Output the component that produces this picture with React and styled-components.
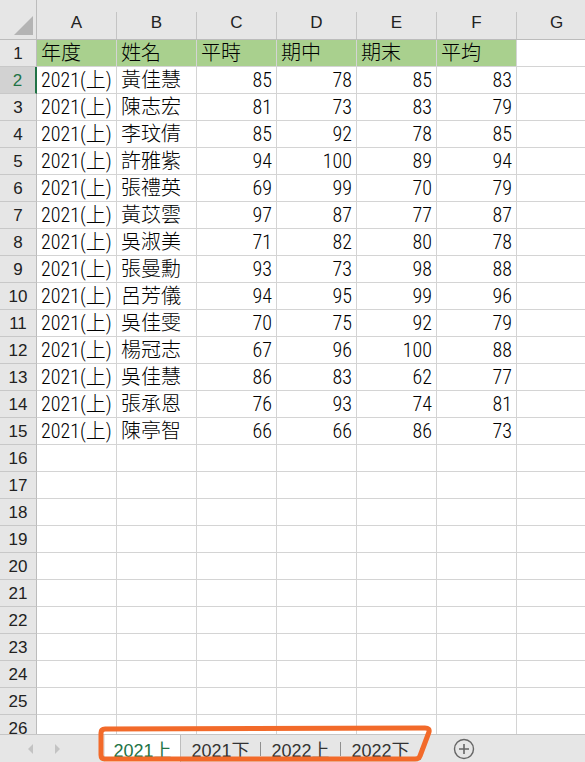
import React from 'react'
import styled, { createGlobalStyle } from 'styled-components'

const GlobalStyle = createGlobalStyle`
    * { box-sizing: border-box; }
    body {
        margin: 0;
        overflow: hidden;
        background: #fff;
    }
`

const CELL_FONT = `"Roboto Condensed", "Liberation Sans Narrow", "DejaVu Sans Condensed", "Noto Sans CJK TC", sans-serif`
const UI_FONT = `"Liberation Sans", "Noto Sans CJK TC", sans-serif`

const Window = styled.div`
    position: relative;
    width: 585px;
    height: 762px;
    display: flex;
    flex-direction: column;
    overflow: hidden;
    background: #fff;
`

const Sheet = styled.div`
    flex: 1;
    overflow: hidden;
`

const HeaderRow = styled.div`
    display: flex;
    height: 40px;
    background: #e6e6e6;
    border-bottom: 1px solid #bcbcbc;
`

const Corner = styled.div`
    flex: 0 0 37px;
    display: flex;
    align-items: flex-end;
    justify-content: flex-end;
    padding: 0 3px 4px 0;
    border-right: 1px solid #bcbcbc;
`

const CornerTriangle = styled.div`
    width: 0;
    height: 0;
    border-left: 19px solid transparent;
    border-bottom: 19px solid #b4b4b4;
`

const ColHead = styled.div`
    flex: 0 0 80px;
    margin-top: 12px;
    display: flex;
    align-items: center;
    justify-content: center;
    padding-bottom: 6px;
    border-right: 1px solid #c4c4c4;
    font-family: ${UI_FONT};
    font-size: 17px;
    color: #222;
`

const Row = styled.div`
    display: flex;
    height: 27px;
`

const RowHead = styled.div`
    flex: 0 0 37px;
    display: flex;
    align-items: center;
    justify-content: center;
    padding-top: 2px;
    background: ${p => (p.$active ? '#d2d2d2' : '#e6e6e6')};
    color: ${p => (p.$active ? '#217346' : '#222')};
    border-bottom: 1px solid #c8c8c8;
    border-right: ${p => (p.$active ? '2px solid #217346' : '1px solid #bcbcbc')};
    font-family: ${UI_FONT};
    font-size: 17px;
`

const Cell = styled.div`
    flex: 0 0 80px;
    display: flex;
    align-items: flex-end;
    justify-content: ${p => (p.$num ? 'flex-end' : 'flex-start')};
    padding: 0 4px 1px 4px;
    background: ${p => (p.$fill ? '#a9d08e' : '#fff')};
    border-right: 1px solid #d4d4d4;
    border-bottom: 1px solid #d4d4d4;
    font-family: ${CELL_FONT};
    font-size: 20px;
    font-weight: 300;
    line-height: 24px;
    color: #000;
    white-space: nowrap;
    overflow: hidden;
`

const TabBar = styled.div`
    flex: 0 0 27px;
    display: flex;
    align-items: stretch;
    background: #e6e6e6;
    border-top: 1px solid #c6c6c6;
    font-family: ${UI_FONT};
    font-size: 18px;
`

const NavArea = styled.div`
    flex: 0 0 105px;
    display: flex;
    align-items: center;
    gap: 22px;
    padding-left: 28px;
`

const NavArrow = styled.div`
    width: 0;
    height: 0;
    border-top: 5px solid transparent;
    border-bottom: 5px solid transparent;
    ${p => (p.$dir === 'left'
        ? 'border-right: 5px solid #c3c3c3;'
        : 'border-left: 5px solid #c3c3c3;')}
`

const Tab = styled.div`
    flex: 0 0 ${p => (p.$active ? '76px' : '79px')};
    display: flex;
    align-items: center;
    justify-content: center;
    padding-top: 1px;
    background: ${p => (p.$active ? '#fff' : 'transparent')};
    color: ${p => (p.$active ? '#217346' : '#333')};
    border-right: ${p => (p.$active ? '1px solid #bdbdbd' : 'none')};
`

const TabSep = styled.div`
    flex: 0 0 1px;
    align-self: center;
    height: 14px;
    background: #8f8f8f;
`

const TabEnd = styled.div`
    flex: 0 0 1px;
    align-self: flex-end;
    height: 12px;
    margin-bottom: 2px;
    background: #9a9a9a;
`

const AddButton = styled.div`
    margin-left: 32px;
    display: flex;
    align-items: center;
`

const Annotation = styled.svg`
    position: absolute;
    left: 0;
    top: 0;
    pointer-events: none;
`

const columns = ['A', 'B', 'C', 'D', 'E', 'F', 'G']
const heads = ['年度', '姓名', '平時', '期中', '期末', '平均']

const students = [
    ['黃佳慧', 85, 78, 85, 83],
    ['陳志宏', 81, 73, 83, 79],
    ['李玟倩', 85, 92, 78, 85],
    ['許雅紫', 94, 100, 89, 94],
    ['張禮英', 69, 99, 70, 79],
    ['黃苡雲', 97, 87, 77, 87],
    ['吳淑美', 71, 82, 80, 78],
    ['張曼勳', 93, 73, 98, 88],
    ['呂芳儀', 94, 95, 99, 96],
    ['吳佳雯', 70, 75, 92, 79],
    ['楊冠志', 67, 96, 100, 88],
    ['吳佳慧', 86, 83, 62, 77],
    ['張承恩', 76, 93, 74, 81],
    ['陳亭智', 66, 66, 86, 73]
]

const EMPTY_ROWS = 11

function PlusIcon() {
    return (
        <svg width="22" height="22" viewBox="0 0 22 22">
            <circle cx="11" cy="11" r="9.5" fill="none" stroke="#666" strokeWidth="1.4" />
            <path d="M11 6v10M6 11h10" stroke="#666" strokeWidth="1.6" />
        </svg>
    )
}

export default function App() {
    return (
        <Window>
            <GlobalStyle />
            <Sheet>
                <HeaderRow>
                    <Corner><CornerTriangle /></Corner>
                    {columns.map(c => <ColHead key={c}>{c}</ColHead>)}
                </HeaderRow>

                <Row>
                    <RowHead>1</RowHead>
                    {heads.map(h => <Cell key={h} $fill>{h}</Cell>)}
                    <Cell />
                </Row>

                {students.map((s, i) => (
                    <Row key={s[0]}>
                        <RowHead $active={i === 0}>{i + 2}</RowHead>
                        <Cell>2021(上)</Cell>
                        <Cell>{s[0]}</Cell>
                        {s.slice(1).map((n, j) => <Cell key={j} $num>{n}</Cell>)}
                        <Cell />
                    </Row>
                ))}

                {Array.from({ length: EMPTY_ROWS }).map((_, i) => (
                    <Row key={'e' + i}>
                        <RowHead>{i + 16}</RowHead>
                        {columns.map(c => <Cell key={c} />)}
                    </Row>
                ))}
            </Sheet>

            <TabBar>
                <NavArea>
                    <NavArrow $dir="left" />
                    <NavArrow $dir="right" />
                </NavArea>
                <Tab $active>2021上</Tab>
                <Tab>2021下</Tab>
                <TabSep />
                <Tab>2022上</Tab>
                <TabSep />
                <Tab>2022下</Tab>
                <TabEnd />
                <AddButton><PlusIcon /></AddButton>
            </TabBar>

            {/* hand-drawn highlight round the sheet tabs */}
            <Annotation width="585" height="762">
                <path
                    d="M105 729 L425 728 Q430 728 429 732 L420 756 Q419 759 415 759 L105 759 Q101 759 101 755 L101 733 Q101 729 105 729 Z"
                    fill="none"
                    stroke="#f26a2a"
                    strokeWidth="5"
                    strokeLinejoin="round"
                />
            </Annotation>
        </Window>
    )
}
